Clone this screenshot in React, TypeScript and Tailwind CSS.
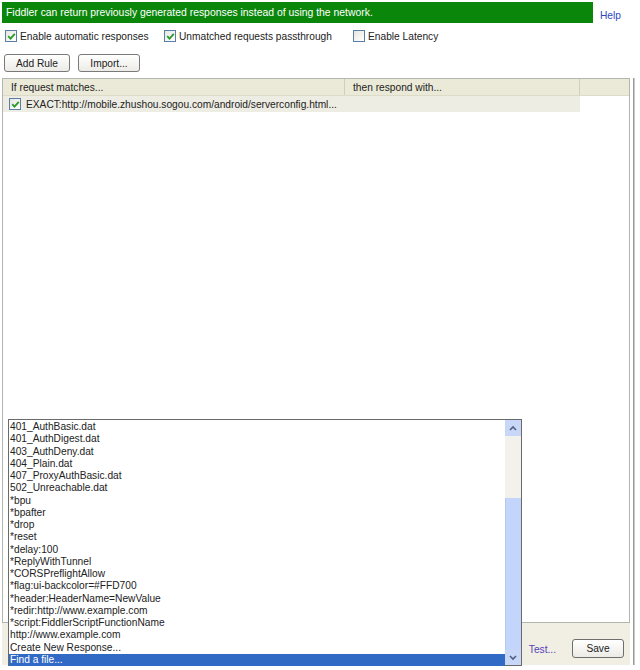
import React from "react";

const font = { fontFamily: '"Liberation Sans", Arial, sans-serif' };

function XPCheck({ checked }: { checked: boolean }) {
  return (
    <span className="inline-flex w-[12px] h-[12px] border border-[#5a7ea8] bg-gradient-to-br from-[#e6e6e0] to-[#ffffff] items-center justify-center shrink-0">
      {checked && (
        <svg width="9" height="9" viewBox="0 0 9 9">
          <path d="M1.2 4.2 L3.5 6.6 L7.8 1.8" fill="none" stroke="#2a9a2a" strokeWidth="1.8" />
        </svg>
      )}
    </span>
  );
}

const items = [
  "401_AuthBasic.dat",
  "401_AuthDigest.dat",
  "403_AuthDeny.dat",
  "404_Plain.dat",
  "407_ProxyAuthBasic.dat",
  "502_Unreachable.dat",
  "*bpu",
  "*bpafter",
  "*drop",
  "*reset",
  "*delay:100",
  "*ReplyWithTunnel",
  "*CORSPreflightAllow",
  "*flag:ui-backcolor=#FFD700",
  "*header:HeaderName=NewValue",
  "*redir:http://www.example.com",
  "*script:FiddlerScriptFunctionName",
  "http://www.example.com",
  "Create New Response...",
];

export default function App() {
  return (
    <div className="relative w-[640px] h-[670px] bg-white text-[10.2px] text-[#222] overflow-hidden" style={font}>
      <div className="flex flex-col h-full pl-[2px] pr-[4px]">
        {/* banner */}
        <div className="flex items-start pt-[2px]">
          <div className="w-[591px] h-[21px] bg-[#0a870a] text-white flex items-center pl-[4px] text-[10.4px]">
            Fiddler can return previously generated responses instead of using the network.
          </div>
          <div className="ml-[7px] mt-[6px] text-[#2c47c0]">Help</div>
        </div>
        {/* checkboxes */}
        <div className="flex items-center h-[14px] mt-[6px] pl-[3px]">
          <XPCheck checked />
          <span className="ml-[3px] w-[144px]">Enable automatic responses</span>
          <XPCheck checked />
          <span className="ml-[3px] w-[174px]">Unmatched requests passthrough</span>
          <XPCheck checked={false} />
          <span className="ml-[3px]">Enable Latency</span>
        </div>
        {/* buttons */}
        <div className="flex gap-[8px] mt-[11px] pl-[2px]">
          <div className="w-[66px] h-[18px] border border-[#7a7a7a] rounded-[3px] bg-gradient-to-b from-white to-[#ecebe6] flex items-center justify-center">Add Rule</div>
          <div className="w-[62px] h-[18px] border border-[#7a7a7a] rounded-[3px] bg-gradient-to-b from-white to-[#ecebe6] flex items-center justify-center">Import...</div>
        </div>
        {/* table + bottom area */}
        <div className="flex flex-1 mt-[6px] mb-[5px]">
          <div className="flex flex-col w-[628px]">
            <div className="flex-1 flex flex-col border border-[#b5b5b0] bg-white">
              <div className="flex h-[17px] bg-[#ebead8] border-b border-[#dcdbc8]">
                <div className="w-[342px] border-r border-[#d0cfbc] pl-[8px] flex items-center">If request matches...</div>
                <div className="w-[235px] border-r border-[#d0cfbc] pl-[8px] flex items-center">then respond with...</div>
                <div className="flex-1" />
              </div>
              <div className="flex h-[16px] w-[577px] bg-[#eeede3] items-center pl-[6px]">
                <XPCheck checked />
                <span className="ml-[5px]">EXACT:http://mobile.zhushou.sogou.com/android/serverconfig.html...</span>
              </div>
            </div>
            <div className="h-[42px] bg-[#f1efe3] flex items-start justify-end pt-[17px] pr-[6px]">
              <span className="text-[#5540b8] mt-[2px] mr-[16px]">Test...</span>
              <div className="w-[52px] h-[19px] border border-[#6e6e6e] rounded-[3px] bg-gradient-to-b from-white to-[#ecebe6] flex items-center justify-center -mt-[1px]">Save</div>
            </div>
          </div>
          <div className="ml-[3px] w-[2px] bg-[#c9c9c9] border-l border-[#9a9a9a]" />
        </div>
      </div>

      {/* dropdown overlay */}
      <div className="absolute left-[8px] top-[419px] w-[514px] h-[247px] bg-white border border-[#6a6a6a] flex">
        <div className="flex-1 flex flex-col pt-[1px]">
          {items.map((t) => (
            <div key={t} className="h-[12.25px] leading-[12.25px] pl-[1px] whitespace-nowrap">{t}</div>
          ))}
          <div className="h-[12.25px] leading-[12.25px] pl-[1px] bg-[#316ac5] text-white mt-auto">Find a file...</div>
        </div>
        <div className="w-[16px] flex flex-col bg-[#f2f1ec]">
          <div className="h-[16px] bg-[#c8d6f8] flex items-center justify-center">
            <svg width="8" height="6" viewBox="0 0 8 6"><path d="M1 5 L4 2 L7 5" fill="none" stroke="#4d6185" strokeWidth="1.6" /></svg>
          </div>
          <div className="h-[62px]" />
          <div className="flex-1 bg-[#c4d5fb] border-l border-[#b4c8f3]" />
          <div className="h-[15px] bg-[#c8d6f8] flex items-center justify-center">
            <svg width="8" height="6" viewBox="0 0 8 6"><path d="M1 1 L4 4 L7 1" fill="none" stroke="#4d6185" strokeWidth="1.6" /></svg>
          </div>
        </div>
      </div>
    </div>
  );
}
